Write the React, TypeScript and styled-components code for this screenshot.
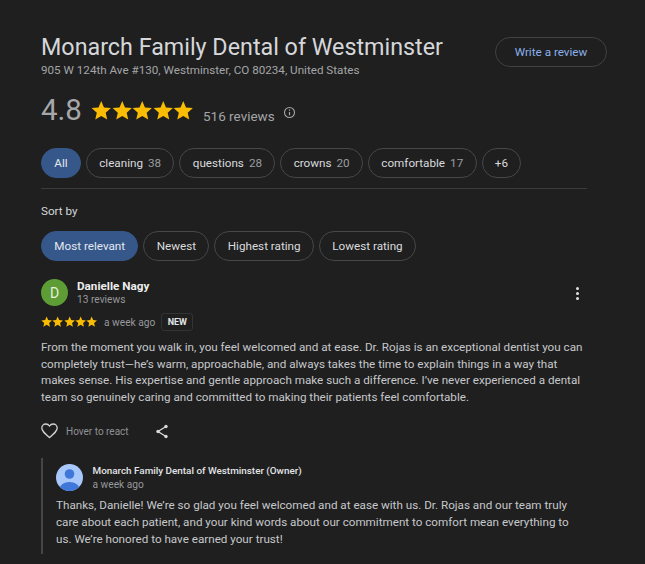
import React from "react";
import styled, { createGlobalStyle } from "styled-components";

const Global = createGlobalStyle`
  html, body { margin: 0; padding: 0; background: #1f1f1f; }
  body { font-family: Roboto, "Liberation Sans", sans-serif; overflow: hidden; }
  #root { width: 645px; height: 564px; overflow: hidden; }
`;

const Page = styled.div`
  width: 645px;
  height: 564px;
  box-sizing: border-box;
  padding: 32px 38px 0 41px;
  background: #1f1f1f;
`;
const Header = styled.header`
  display: flex;
  justify-content: space-between;
  align-items: flex-start;
`;
const Title = styled.h1`
  margin: 0;
  font-size: 23.3px;
  line-height: 30px;
  font-weight: 400;
  color: #d5d7da;
`;
const Address = styled.div`
  font-size: 11.67px;
  line-height: 16px;
  color: #a3a5a8;
`;
const WriteButton = styled.button`
  width: 112px;
  height: 30px;
  margin-top: 5px;
  border: 1px solid #3f4144;
  border-radius: 15px;
  background: transparent;
  color: #8ab0ec;
  font: 400 11.7px Roboto, sans-serif;
  padding: 0;
`;
const RatingRow = styled.div`
  display: flex;
  align-items: center;
  margin-top: 14px;
  height: 36px;
`;
const Score = styled.span`
  font-size: 29.5px;
  line-height: 36px;
  color: #a5a7aa;
  width: 50px;
`;
const BigStars = styled.span`
  display: flex;
  width: 112px;
  color: #fbbc04;
`;
const ReviewCount = styled.span`
  font-size: 13.5px;
  color: #a3a5a8;
  margin-top: 12px;
  width: 80px;
`;
const InfoWrap = styled.span`
  display: flex;
  margin-top: 5px;
`;
const ChipRow = styled.div<{ $top: number }>`
  display: flex;
  gap: 5px;
  margin-top: ${(p) => p.$top}px;
`;
const Chip = styled.div<{ $active?: boolean }>`
  height: 30px;
  box-sizing: border-box;
  padding: 0 12.3px;
  display: flex;
  align-items: center;
  border-radius: 15px;
  border: 1px solid ${(p) => (p.$active ? "#36578a" : "#45474a")};
  background: ${(p) => (p.$active ? "#36578a" : "transparent")};
  color: ${(p) => (p.$active ? "#e3e8f0" : "#d9dbde")};
  font-size: 11.7px;
  white-space: nowrap;
`;
const ChipCount = styled.span`
  color: #9a9c9f;
  margin-left: 5px;
`;
const Divider = styled.hr`
  width: 546px;
  height: 1px;
  border: 0;
  background: #3a3b3d;
  margin: 10px 0 0;
`;
const SortLabel = styled.div`
  margin-top: 14px;
  font-size: 11.7px;
  line-height: 16px;
  color: #d5d7da;
`;
const ReviewHead = styled.div`
  display: flex;
  align-items: center;
  margin-top: 18px;
  width: 546px;
`;
const Avatar = styled.div`
  width: 27px;
  height: 27px;
  border-radius: 50%;
  background: #5e9c36;
  color: #e6eedd;
  font-size: 14px;
  display: flex;
  align-items: center;
  justify-content: center;
`;
const ReviewerInfo = styled.div`
  margin-left: 9px;
  flex: 1;
`;
const ReviewerName = styled.div`
  font-size: 11.7px;
  line-height: 14px;
  font-weight: 700;
  color: #eceded;
`;
const ReviewerMeta = styled.div`
  font-size: 10.2px;
  line-height: 13px;
  color: #96989b;
`;
const Dots = styled.div`
  display: flex;
  flex-direction: column;
  gap: 2px;
  margin-right: 8px;
  margin-top: 1px;
`;
const Dot = styled.i`
  width: 3px;
  height: 3px;
  border-radius: 50%;
  background: #e0e1e3;
`;
const MetaRow = styled.div`
  display: flex;
  align-items: center;
  margin-top: 6px;
  height: 20px;
`;
const SmallStars = styled.span`
  display: flex;
  color: #fbbc04;
  width: 63px;
`;
const Ago = styled.span`
  font-size: 10.2px;
  color: #96989b;
`;
const NewBadge = styled.span`
  margin-left: 6px;
  height: 18px;
  width: 32px;
  box-sizing: border-box;
  border: 1px solid #323335;
  border-radius: 3px;
  color: #e3e4e6;
  font-size: 9px;
  font-weight: 700;
  display: flex;
  align-items: center;
  justify-content: center;
`;
const Body = styled.p`
  margin: 7px 0 0;
  width: 548px;
  font-size: 11.66px;
  line-height: 16.6px;
  color: #c6c8cb;
`;
const Actions = styled.div`
  display: flex;
  align-items: center;
  margin-top: 16px;
  height: 20px;
`;
const HoverText = styled.span`
  font-size: 10px;
  color: #8f9194;
  margin-left: 8px;
  width: 89px;
`;
const Reply = styled.section`
  margin-top: 17px;
  border-left: 2px solid #44464a;
  padding-left: 13px;
  height: 96px;
  box-sizing: border-box;
  width: 546px;
`;
const ReplyHead = styled.div`
  display: flex;
  align-items: center;
  padding-top: 6px;
`;
const ReplyInfo = styled.div`
  margin-left: 9.5px;
`;
const ReplyName = styled.div`
  font-size: 9.88px;
  line-height: 14px;
  font-weight: 500;
  color: #e3e4e6;
`;
const ReplyBody = styled(Body)`
  margin-top: 6px;
  width: 530px;
`;

const Star = ({ size }: { size: number }) => (
  <svg width={size} height={size} viewBox="0 0 24 24" fill="currentColor">
    <path d="M12 1.2l3.2 7.5 8.1.7-6.1 5.4 1.8 8L12 18.6l-7 4.2 1.8-8L.7 9.4l8.1-.7z" />
  </svg>
);

const stars = [0, 1, 2, 3, 4];
const topics: [string, number][] = [
  ["cleaning", 38],
  ["questions", 28],
  ["crowns", 20],
  ["comfortable", 17],
];

export default function App() {
  return (
    <Page>
      <Global />
      <Header>
        <div>
          <Title>Monarch Family Dental of Westminster</Title>
          <Address>905 W 124th Ave #130, Westminster, CO 80234, United States</Address>
        </div>
        <WriteButton>Write a review</WriteButton>
      </Header>
      <RatingRow>
        <Score>4.8</Score>
        <BigStars>
          {stars.map((s) => (
            <Star key={s} size={20.5} />
          ))}
        </BigStars>
        <ReviewCount>516 reviews</ReviewCount>
        <InfoWrap>
          <svg width="13" height="13" viewBox="0 0 13 13" fill="none" stroke="#a3a5a8">
            <circle cx="6.5" cy="6.5" r="5" strokeWidth="1.1" />
            <path d="M6.5 6v3.2M6.5 3.6v1.2" strokeWidth="1.2" />
          </svg>
        </InfoWrap>
      </RatingRow>
      <ChipRow $top={20}>
        <Chip $active>All</Chip>
        {topics.map(([name, n]) => (
          <Chip key={name}>
            {name}
            <ChipCount>{n}</ChipCount>
          </Chip>
        ))}
        <Chip>+6</Chip>
      </ChipRow>
      <Divider />
      <SortLabel>Sort by</SortLabel>
      <ChipRow $top={12}>
        <Chip $active>Most relevant</Chip>
        <Chip>Newest</Chip>
        <Chip>Highest rating</Chip>
        <Chip>Lowest rating</Chip>
      </ChipRow>
      <ReviewHead>
        <Avatar>D</Avatar>
        <ReviewerInfo>
          <ReviewerName>Danielle Nagy</ReviewerName>
          <ReviewerMeta>13 reviews</ReviewerMeta>
        </ReviewerInfo>
        <Dots>
          <Dot />
          <Dot />
          <Dot />
        </Dots>
      </ReviewHead>
      <MetaRow>
        <SmallStars>
          {stars.map((s) => (
            <Star key={s} size={11.3} />
          ))}
        </SmallStars>
        <Ago>a week ago</Ago>
        <NewBadge>NEW</NewBadge>
      </MetaRow>
      <Body>
        From the moment you walk in, you feel welcomed and at ease. Dr. Rojas is an exceptional dentist you can
        completely trust—he’s warm, approachable, and always takes the time to explain things in a way that
        makes sense. His expertise and gentle approach make such a difference. I’ve never experienced a dental
        team so genuinely caring and committed to making their patients feel comfortable.
      </Body>
      <Actions>
        <svg width="17" height="16" viewBox="0 0 17 16" fill="none" stroke="#cfd1d3" strokeWidth="1.3">
          <path d="M8.5 14.6C3.5 10.3.8 8 .8 5.1.8 2.8 2.6 1 4.8 1c1.5 0 2.9.8 3.7 2 .8-1.2 2.2-2 3.700-2 2.200 0 4 1.800 4 4.100 0 2.900-2.700 5.200-7.700 9.500z" />
        </svg>
        <HoverText>Hover to react</HoverText>
        <svg width="14" height="15" viewBox="0 0 14 15" fill="#d8d9db" stroke="#d8d9db">
          <path d="M11 2.500L3 7.500l8 5" fill="none" strokeWidth="1.3" />
          <circle cx="11" cy="2.500" r="1.7" strokeWidth="0" />
          <circle cx="3" cy="7.500" r="1.7" strokeWidth="0" />
          <circle cx="11" cy="12.500" r="1.7" strokeWidth="0" />
        </svg>
      </Actions>
      <Reply>
        <ReplyHead>
          <svg width="27" height="27" viewBox="0 0 27 27">
            <defs>
              <clipPath id="ownerClip">
                <circle cx="13.500" cy="13.500" r="13.500" />
              </clipPath>
            </defs>
            <g clipPath="url(#ownerClip)">
              <rect width="27" height="27" fill="#a8c7fa" />
              <circle cx="13.500" cy="10" r="4.800" fill="#3f78d8" />
              <ellipse cx="13.500" cy="25" rx="10" ry="7" fill="#3f78d8" />
            </g>
          </svg>
          <ReplyInfo>
            <ReplyName>Monarch Family Dental of Westminster (Owner)</ReplyName>
            <ReviewerMeta>a week ago</ReviewerMeta>
          </ReplyInfo>
        </ReplyHead>
        <ReplyBody>
          Thanks, Danielle! We’re so glad you feel welcomed and at ease with us. Dr. Rojas and our team truly
          care about each patient, and your kind words about our commitment to comfort mean everything to
          us. We’re honored to have earned your trust!
        </ReplyBody>
      </Reply>
    </Page>
  );
}
